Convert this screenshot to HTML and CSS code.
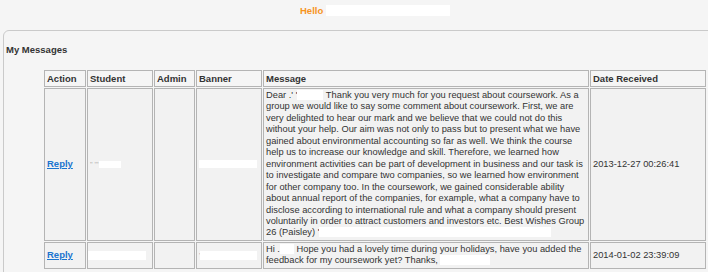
FILE: index.html
```html
<!DOCTYPE html>
<html>
<head>
<meta charset="utf-8">
<link rel="stylesheet" href="styles.css">
</head>
<body>
<div class="topbar"><span class="hello">Hello</span><span class="redact r-head"></span></div>
<div class="panel">
  <div class="title">My Messages</div>
  <table class="msgs">
    <thead>
      <tr>
        <th class="c-action">Action</th>
        <th class="c-student">Student</th>
        <th class="c-admin">Admin</th>
        <th class="c-banner">Banner</th>
        <th class="c-message">Message</th>
        <th class="c-date">Date Received</th>
      </tr>
    </thead>
    <tbody>
      <tr>
        <td><a class="reply" href="#">Reply</a></td>
        <td class="cell-red"><span class="dots">'' '''</span><span class="redact r-s1"></span></td>
        <td></td>
        <td class="cell-red"><span class="redact r-b1"></span></td>
        <td class="msg">Dear .' '<span class="redact r-name1"></span> Thank you very much for you request about coursework. As a group we would like to say some comment about coursework. First, we are very delighted to hear our mark and we believe that we could not do this without your help. Our aim was not only to pass but to present what we have gained about environmental accounting so far as well. We think the course help us to increase our knowledge and skill. Therefore, we learned how environment activities can be part of development in business and our task is to investigate and compare two companies, so we learned how environment for other company too. In the coursework, we gained considerable ability about annual report of the companies, for example, what a company have to disclose according to international rule and what a company should present voluntarily in order to attract customers and investors etc. Best Wishes Group 26 (Paisley) '<span class="redact r-sign"></span></td>
        <td class="date">2013-12-27 00:26:41</td>
      </tr>
      <tr>
        <td><a class="reply" href="#">Reply</a></td>
        <td class="cell-red"><span class="redact r-s2"></span></td>
        <td></td>
        <td class="cell-red"><span class="dots">'</span><span class="redact r-b2"></span></td>
        <td class="msg">Hi .<span class="redact r-name2"></span> Hope you had a lovely time during your holidays, have you added the feedback for my coursework yet? Thanks,<span class="redact r-thanks"></span></td>
        <td class="date">2014-01-02 23:39:09</td>
      </tr>
    </tbody>
  </table>
</div>
</body>
</html>
```
FILE: styles.css
```css
html, body {
  margin: 0;
  padding: 0;
  background: #f5f5f5;
  overflow: hidden;
}
body {
  font-family: "Liberation Sans", Arial, sans-serif;
  font-size: 9.3px;
  color: #333;
}
.topbar {
  height: 30px;
  box-sizing: border-box;
  padding: 5px 0 0 300px;
  line-height: 11px;
  display: flex;
  align-items: center;
  align-self: flex-start;
  height: 30px;
  padding-top: 0;
  padding-bottom: 10px;
}
.hello {
  color: #f7941d;
  font-weight: bold;
  font-size: 9.5px;
}
.redact {
  display: inline-block;
  background: #ffffff;
  vertical-align: middle;
}
.r-head { width: 124px; height: 11px; margin-left: 3px; }
.panel {
  margin-left: 3px;
  margin-right: -20px;
  border: 1px solid #cacaca;
  border-radius: 6px 0 0 0;
  padding-top: 13px;
  height: 400px;
}
.title {
  padding-left: 2px;
  font-weight: bold;
  font-size: 9.5px;
  line-height: 12px;
  color: #333;
  margin-bottom: 13px;
}
.msgs {
  margin-left: 39px;
  border-collapse: separate;
  border-spacing: 1px;
  table-layout: fixed;
  width: 664px;
}
.msgs th, .msgs td {
  box-sizing: border-box;
  border: 1px solid #b4b4b4;
  padding: 1px 2px;
  text-align: left;
  color: #333;
}
.msgs th {
  font-weight: bold;
  font-size: 9.5px;
  line-height: 11px;
  padding: 2px 2px;
  vertical-align: middle;
}
.msgs td {
  background: #f2f2f2;
  line-height: 11.46px;
  vertical-align: middle;
}
.c-action { width: 42px; }
.c-student { width: 66px; }
.c-admin { width: 41px; }
.c-banner { width: 66px; }
.c-message { width: 326px; }
.c-date { width: 116px; }
.msg { vertical-align: top; }
.date { padding-left: 3px; }
.reply {
  color: #1b74cf;
  font-weight: bold;
  font-size: 9.5px;
  text-decoration: underline;
}
.cell-red { white-space: nowrap; overflow: hidden; }
.dots { color: #aaa; font-size: 7px; vertical-align: middle; }
.r-s1 { width: 22px; height: 7px; }
.r-b1 { width: 58px; height: 8px; }
.r-s2 { width: 58px; height: 9px; margin-left: -2px; }
.r-b2 { width: 57px; height: 9px; }
.r-name1 { width: 26px; height: 10px; vertical-align: -2px; }
.r-name2 { width: 14px; height: 10px; vertical-align: -2px; }
.r-sign { width: 232px; height: 10px; vertical-align: -2px; }
.r-thanks { width: 50px; height: 10px; margin-left: 2px; vertical-align: -2px; }
```
